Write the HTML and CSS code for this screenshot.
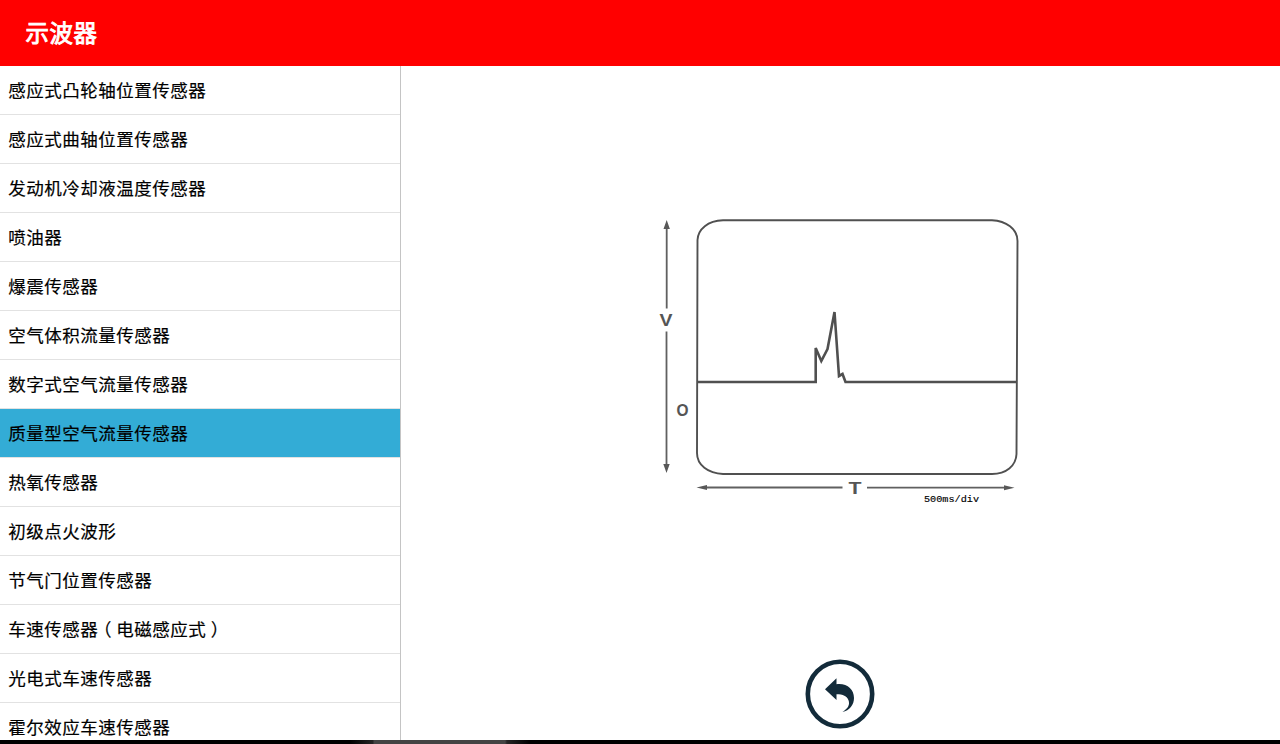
FILE: index.html
```html
<!DOCTYPE html>
<html lang="zh-CN">
<head>
<meta charset="utf-8">
<title>示波器</title>
<link rel="stylesheet" href="styles.css">
</head>
<body>
<div class="app">
  <header class="header"><h1 class="title">示波器</h1></header>
  <div class="content">
    <ul class="sensors">
      <li class="sensor">感应式凸轮轴位置传感器</li>
      <li class="sensor">感应式曲轴位置传感器</li>
      <li class="sensor">发动机冷却液温度传感器</li>
      <li class="sensor">喷油器</li>
      <li class="sensor">爆震传感器</li>
      <li class="sensor">空气体积流量传感器</li>
      <li class="sensor">数字式空气流量传感器</li>
      <li class="sensor selected">质量型空气流量传感器</li>
      <li class="sensor">热氧传感器</li>
      <li class="sensor">初级点火波形</li>
      <li class="sensor">节气门位置传感器</li>
      <li class="sensor">车速传感器<span class="paren">（</span>电磁感应式<span class="paren">）</span></li>
      <li class="sensor">光电式车速传感器</li>
      <li class="sensor">霍尔效应车速传感器</li>
    </ul>
    <main class="panel">
      <svg class="scope" width="380" height="300" viewBox="650 210 380 300">
        <g class="trace">
          <path d="M723 220.200H992C1006 220.700 1017.500 229 1017.500 241L1016.500 454C1016 466 1006 474 992 474H723C708 473.500 697 465 697 453L697.500 240C698 229 708 220.700 723 220.200Z"/>
          <path class="bold" d="M697 382H815.700V348L821.300 361L827.500 349L834.500 312L839 376L842.500 374L845.500 382H1017"/>
        </g>
        <g class="axis">
          <path d="M666.700 227V308.500M666.500 331.500V466M704 487.500H842.500M867 487.700H1006"/>
          <path class="tip" d="M666.700 220L663.500 229H669.900ZM666.500 473L663.300 464H669.700ZM696.500 487.500L707 485V490ZM1014.500 487.700L1004 485.200V490.200Z"/>
        </g>
        <text class="label" x="659.500" y="325.500" textLength="13" lengthAdjust="spacingAndGlyphs">V</text>
        <text class="label zero" x="676.500" y="416" textLength="12" lengthAdjust="spacingAndGlyphs">O</text>
        <text class="label" x="848.500" y="494" textLength="13" lengthAdjust="spacingAndGlyphs">T</text>
        <text class="scale" x="924" y="502" textLength="55" lengthAdjust="spacingAndGlyphs">500ms/div</text>
      </svg>
      <button class="back" aria-label="返回">
        <svg width="70" height="70" viewBox="0 0 70 70">
          <circle class="ring" cx="35" cy="35" r="32.200"/>
          <path class="arrow" d="M20 30.200L31.500 19.200V25.200C42 24 49 30 49 39C49 46 44.500 51.500 37.500 53C43.500 49 45 45.500 43.500 41.200C42 37 38 35.200 31.500 35.200V41Z"/>
        </svg>
      </button>
    </main>
  </div>
  <footer class="bottom"></footer>
</div>
</body>
</html>
```
FILE: styles.css
```css
* {
  box-sizing: border-box;
}

body {
  margin: 0;
  font-family: "Noto Sans CJK SC", sans-serif;
}

.app {
  display: flex;
  flex-direction: column;
  height: 744px;
  overflow: hidden;
  background: #fff;
}

.header {
  display: flex;
  flex: none;
  align-items: center;
  height: 66px;
  padding: 0 0 2px 25.5px;
  background: #f00;
}

.title {
  margin: 0;
  color: #fff;
  font-size: 23.4px;
  font-weight: 400;
  letter-spacing: 0.6px;
  line-height: 36px;
  -webkit-text-stroke: 0.9px #fff;
}

.content {
  display: flex;
  flex: 1;
  min-height: 0;
}

.sensors {
  flex: none;
  width: 401px;
  margin: 0;
  padding: 0;
  overflow: hidden;
  list-style: none;
  border-right: 1px solid #c4c4c4;
}

.sensor {
  height: 49px;
  padding-left: 8.3px;
  border-bottom: 1px solid #e2e2e2;
  color: #000;
  font-size: 17.5px;
  letter-spacing: 0.5px;
  line-height: 47px;
  white-space: nowrap;
  -webkit-text-stroke: 0.2px #000;
}

.selected {
  background: #33acd6;
}

/* Half-width glyphs centred in a full-width slot */
.paren {
  display: inline-block;
  width: 18px;
  text-align: center;
  font-feature-settings: "halt";
}

.panel {
  display: flex;
  flex: 1;
  flex-direction: column;
  align-items: center;
  justify-content: space-between;
  padding: 144px 1px 11px 0;
}

.scope {
  display: block;
}

.trace {
  fill: none;
  stroke: #505050;
  stroke-width: 1.9;
}

.bold {
  stroke-width: 2.6;
}

.axis {
  fill: none;
  stroke: #606060;
  stroke-width: 1.8;
}

.tip {
  fill: #585858;
  stroke: none;
}

.label {
  fill: #555;
  font: bold 16.5px "Liberation Sans", sans-serif;
}

.zero {
  font-size: 16px;
}

.scale {
  fill: #000;
  stroke: #000;
  stroke-width: 0.15;
  font: 9.5px "Liberation Mono", monospace;
}

.back {
  display: block;
  padding: 0;
  border: 0;
  background: none;
}

.back svg {
  display: block;
}

.ring {
  fill: none;
  stroke: #132b3a;
  stroke-width: 4.6;
}

.arrow {
  fill: #132b3a;
}

.bottom {
  flex: none;
  height: 4px;
  background: linear-gradient(90deg, #000 350px, #252525 373px, #444 374px, #444 505px, #252525 507px, #000 530px);
}
```
